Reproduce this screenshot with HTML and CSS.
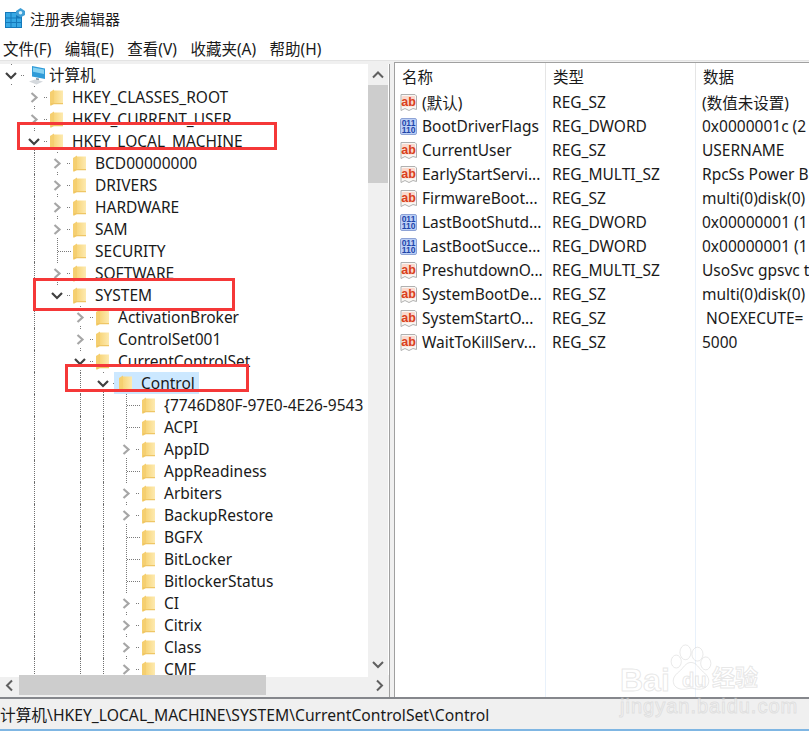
FILE: index.html
```html
<!DOCTYPE html>
<html lang="zh">
<head>
<meta charset="utf-8">
<title>注册表编辑器</title>
<link rel="stylesheet" href="styles.css">
</head>
<body>
<svg class="defs" width="0" height="0" aria-hidden="true">
  <defs>
    <linearGradient id="fold" x1="0" x2="1" y1="0" y2="0">
      <stop offset="0" stop-color="#f8d67c"/><stop offset="1" stop-color="#fdeab0"/>
    </linearGradient>
    <symbol id="closed" viewBox="0 0 27 22">
      <path class="dots" d="M11.5 0V1M11.5 20V21M21 11.5H25"/>
      <path class="chev-c" d="M8.5 7l5 4.5-5 4.5"/>
    </symbol>
    <symbol id="open" viewBox="0 0 27 22">
      <path class="dots" d="M11.5 0V1M11.5 20V22M21 11.5H25"/>
      <path class="chev-o" d="M6 9l5 5 5-5"/>
    </symbol>
    <symbol id="openlast" viewBox="0 0 27 22">
      <path class="dots" d="M11.5 0V1M21 11.5H25"/>
      <path class="chev-o" d="M6 9l5 5 5-5"/>
    </symbol>
    <symbol id="leaf" viewBox="0 0 27 22">
      <path class="dots" d="M11.5 0V22M12 11.5H26"/>
    </symbol>
    <symbol id="folder" viewBox="0 0 13 16">
      <path d="M4 1H13V14H4Z" fill="url(#fold)"/>
      <path d="M0 2.5L4 0V14.5L1 16H0Z" fill="#f5cf70"/>
      <path d="M1 13.6H13V14.8H3L1 16Z" fill="#efc665"/>
    </symbol>
    <symbol id="computer" viewBox="0 0 18 20">
      <path d="M4 1L17 3.5V14L4 11.5Z" fill="#2f9bd8"/>
      <path d="M5 2.5L16 4.6V9L5 6.8Z" fill="#86d2f2"/>
      <path d="M8 13L11 13.6V15.4L8 14.8Z" fill="#8b9aa5"/>
      <path d="M1 16.5L7 14.5L15 16.5L8.5 19.5Z" fill="#d5d9dd"/>
    </symbol>
    <symbol id="sz" viewBox="0 0 17 17">
      <path d="M1 .5H15L16.5 2V15.5L13 14.5L9 16.5L5 14.5L1 16.5Z" fill="#f9f7f4" stroke="#b0b0b0"/>
      <rect x="2" y="2" width="13" height="10.5" rx="1" fill="#fbd9cd"/>
      <text x="8.6" y="11.5" class="ab">ab</text>
    </symbol>
    <symbol id="dw" viewBox="0 0 17 17">
      <rect x=".5" y=".5" width="16" height="16" rx="1.5" fill="#bcd0f6" stroke="#8ea3d6"/>
      <text x="8.5" y="7.5" class="bin">011</text>
      <text x="8.5" y="15" class="bin">110</text>
    </symbol>
  </defs>
</svg>

<div class="window">
  <header class="titlebar">
    <svg class="app-icon" width="20" height="20" viewBox="0 0 20 20" aria-hidden="true">
      <rect x="0" y="4" width="17" height="16" fill="#1479bb"/>
      <path d="M1 5H5.5V9.5H1ZM6.5 5H11V9.5H6.5ZM1 10.5H5.5V14H1ZM6.5 10.5H11V14H6.5ZM12 10.5H16V14H12ZM1 15H5.5V19H1ZM6.5 15H11V19H6.5ZM12 15H16V19H12Z" fill="#36a8e4"/>
      <path d="M15.5 0L20 3V7L15.5 9.5L11 7V3Z" fill="#3f9fd6"/>
      <circle cx="15.5" cy="4.7" r="1.8" fill="#d5effb"/>
    </svg>
    <span>注册表编辑器</span>
  </header>
  <nav class="menubar">
    <span>文件(F)</span><span>编辑(E)</span><span>查看(V)</span><span>收藏夹(A)</span><span>帮助(H)</span>
  </nav>

  <main class="panes">
    <section class="tree-pane">
      <div class="tree-view">
        <div class="tree">
          <div class="row"><svg class="exp"><use href="#open"/></svg><svg class="ico-pc"><use href="#computer"/></svg><span class="lbl root">计算机</span></div>

          <div class="row"><i class="g"></i><svg class="exp"><use href="#closed"/></svg><svg class="fld"><use href="#folder"/></svg><span class="lbl">HKEY_CLASSES_ROOT</span></div>
          <div class="row"><i class="g"></i><svg class="exp"><use href="#closed"/></svg><svg class="fld"><use href="#folder"/></svg><span class="lbl">HKEY_CURRENT_USER</span></div>
          <div class="row"><i class="g"></i><svg class="exp"><use href="#open"/></svg><svg class="fld"><use href="#folder"/></svg><span class="lbl">HKEY_LOCAL_MACHINE</span></div>

          <div class="row"><i class="g"></i><i class="g on"></i><svg class="exp"><use href="#closed"/></svg><svg class="fld"><use href="#folder"/></svg><span class="lbl">BCD00000000</span></div>
          <div class="row"><i class="g"></i><i class="g on"></i><svg class="exp"><use href="#closed"/></svg><svg class="fld"><use href="#folder"/></svg><span class="lbl">DRIVERS</span></div>
          <div class="row"><i class="g"></i><i class="g on"></i><svg class="exp"><use href="#closed"/></svg><svg class="fld"><use href="#folder"/></svg><span class="lbl">HARDWARE</span></div>
          <div class="row"><i class="g"></i><i class="g on"></i><svg class="exp"><use href="#closed"/></svg><svg class="fld"><use href="#folder"/></svg><span class="lbl">SAM</span></div>
          <div class="row"><i class="g"></i><i class="g on"></i><svg class="exp"><use href="#leaf"/></svg><svg class="fld"><use href="#folder"/></svg><span class="lbl">SECURITY</span></div>
          <div class="row"><i class="g"></i><i class="g on"></i><svg class="exp"><use href="#closed"/></svg><svg class="fld"><use href="#folder"/></svg><span class="lbl">SOFTWARE</span></div>
          <div class="row"><i class="g"></i><i class="g on"></i><svg class="exp"><use href="#openlast"/></svg><svg class="fld"><use href="#folder"/></svg><span class="lbl">SYSTEM</span></div>

          <div class="row"><i class="g"></i><i class="g on"></i><i class="g"></i><svg class="exp"><use href="#closed"/></svg><svg class="fld"><use href="#folder"/></svg><span class="lbl">ActivationBroker</span></div>
          <div class="row"><i class="g"></i><i class="g on"></i><i class="g"></i><svg class="exp"><use href="#closed"/></svg><svg class="fld"><use href="#folder"/></svg><span class="lbl">ControlSet001</span></div>
          <div class="row"><i class="g"></i><i class="g on"></i><i class="g"></i><svg class="exp"><use href="#open"/></svg><svg class="fld"><use href="#folder"/></svg><span class="lbl">CurrentControlSet</span></div>

          <div class="row"><i class="g"></i><i class="g on"></i><i class="g"></i><i class="g on"></i><svg class="exp"><use href="#open"/></svg><span class="sel"><svg class="fld"><use href="#folder"/></svg><span class="lbl">Control</span></span></div>

          <div class="row"><i class="g"></i><i class="g on"></i><i class="g"></i><i class="g on"></i><i class="g on"></i><svg class="exp"><use href="#leaf"/></svg><svg class="fld"><use href="#folder"/></svg><span class="lbl">{7746D80F-97E0-4E26-9543</span></div>
          <div class="row"><i class="g"></i><i class="g on"></i><i class="g"></i><i class="g on"></i><i class="g on"></i><svg class="exp"><use href="#leaf"/></svg><svg class="fld"><use href="#folder"/></svg><span class="lbl">ACPI</span></div>
          <div class="row"><i class="g"></i><i class="g on"></i><i class="g"></i><i class="g on"></i><i class="g on"></i><svg class="exp"><use href="#closed"/></svg><svg class="fld"><use href="#folder"/></svg><span class="lbl">AppID</span></div>
          <div class="row"><i class="g"></i><i class="g on"></i><i class="g"></i><i class="g on"></i><i class="g on"></i><svg class="exp"><use href="#leaf"/></svg><svg class="fld"><use href="#folder"/></svg><span class="lbl">AppReadiness</span></div>
          <div class="row"><i class="g"></i><i class="g on"></i><i class="g"></i><i class="g on"></i><i class="g on"></i><svg class="exp"><use href="#closed"/></svg><svg class="fld"><use href="#folder"/></svg><span class="lbl">Arbiters</span></div>
          <div class="row"><i class="g"></i><i class="g on"></i><i class="g"></i><i class="g on"></i><i class="g on"></i><svg class="exp"><use href="#closed"/></svg><svg class="fld"><use href="#folder"/></svg><span class="lbl">BackupRestore</span></div>
          <div class="row"><i class="g"></i><i class="g on"></i><i class="g"></i><i class="g on"></i><i class="g on"></i><svg class="exp"><use href="#leaf"/></svg><svg class="fld"><use href="#folder"/></svg><span class="lbl">BGFX</span></div>
          <div class="row"><i class="g"></i><i class="g on"></i><i class="g"></i><i class="g on"></i><i class="g on"></i><svg class="exp"><use href="#leaf"/></svg><svg class="fld"><use href="#folder"/></svg><span class="lbl">BitLocker</span></div>
          <div class="row"><i class="g"></i><i class="g on"></i><i class="g"></i><i class="g on"></i><i class="g on"></i><svg class="exp"><use href="#leaf"/></svg><svg class="fld"><use href="#folder"/></svg><span class="lbl">BitlockerStatus</span></div>
          <div class="row"><i class="g"></i><i class="g on"></i><i class="g"></i><i class="g on"></i><i class="g on"></i><svg class="exp"><use href="#closed"/></svg><svg class="fld"><use href="#folder"/></svg><span class="lbl">CI</span></div>
          <div class="row"><i class="g"></i><i class="g on"></i><i class="g"></i><i class="g on"></i><i class="g on"></i><svg class="exp"><use href="#closed"/></svg><svg class="fld"><use href="#folder"/></svg><span class="lbl">Citrix</span></div>
          <div class="row"><i class="g"></i><i class="g on"></i><i class="g"></i><i class="g on"></i><i class="g on"></i><svg class="exp"><use href="#closed"/></svg><svg class="fld"><use href="#folder"/></svg><span class="lbl">Class</span></div>
          <div class="row"><i class="g"></i><i class="g on"></i><i class="g"></i><i class="g on"></i><i class="g on"></i><svg class="exp"><use href="#closed"/></svg><svg class="fld"><use href="#folder"/></svg><span class="lbl">CMF</span></div>
        </div>
        <div class="vscroll">
          <svg class="arrow" viewBox="0 0 20 20"><path d="M5 13l5-5 5 5"/></svg>
          <div class="vtrack"><div class="vthumb"></div></div>
          <svg class="arrow" viewBox="0 0 20 20"><path d="M5 7.5l5 5 5-5"/></svg>
        </div>
      </div>
      <div class="hscroll">
        <svg class="arrow" viewBox="0 0 20 20"><path d="M12 5l-5 5 5 5"/></svg>
        <div class="htrack"><div class="hthumb"></div></div>
        <svg class="arrow" viewBox="0 0 20 20"><path d="M8 5l5 5-5 5"/></svg>
      </div>
    </section>

    <section class="list-pane">
      <div class="lrow head"><span class="c1 h">名称</span><span class="c2 h">类型</span><span class="c3 h">数据</span></div>
      <div class="lrow"><span class="c1"><svg class="val"><use href="#sz"/></svg><span class="n">(默认)</span></span><span class="c2">REG_SZ</span><span class="c3">(数值未设置)</span></div>
      <div class="lrow"><span class="c1"><svg class="val"><use href="#dw"/></svg><span class="n">BootDriverFlags</span></span><span class="c2">REG_DWORD</span><span class="c3">0x0000001c (2</span></div>
      <div class="lrow"><span class="c1"><svg class="val"><use href="#sz"/></svg><span class="n">CurrentUser</span></span><span class="c2">REG_SZ</span><span class="c3">USERNAME</span></div>
      <div class="lrow"><span class="c1"><svg class="val"><use href="#sz"/></svg><span class="n">EarlyStartServi...</span></span><span class="c2">REG_MULTI_SZ</span><span class="c3">RpcSs Power B</span></div>
      <div class="lrow"><span class="c1"><svg class="val"><use href="#sz"/></svg><span class="n">FirmwareBoot...</span></span><span class="c2">REG_SZ</span><span class="c3">multi(0)disk(0)</span></div>
      <div class="lrow"><span class="c1"><svg class="val"><use href="#dw"/></svg><span class="n">LastBootShutd...</span></span><span class="c2">REG_DWORD</span><span class="c3">0x00000001 (1</span></div>
      <div class="lrow"><span class="c1"><svg class="val"><use href="#dw"/></svg><span class="n">LastBootSucce...</span></span><span class="c2">REG_DWORD</span><span class="c3">0x00000001 (1</span></div>
      <div class="lrow"><span class="c1"><svg class="val"><use href="#sz"/></svg><span class="n">PreshutdownO...</span></span><span class="c2">REG_MULTI_SZ</span><span class="c3">UsoSvc gpsvc t</span></div>
      <div class="lrow"><span class="c1"><svg class="val"><use href="#sz"/></svg><span class="n">SystemBootDe...</span></span><span class="c2">REG_SZ</span><span class="c3">multi(0)disk(0)</span></div>
      <div class="lrow"><span class="c1"><svg class="val"><use href="#sz"/></svg><span class="n">SystemStartO...</span></span><span class="c2">REG_SZ</span><span class="c3 pre"> NOEXECUTE=</span></div>
      <div class="lrow"><span class="c1"><svg class="val"><use href="#sz"/></svg><span class="n">WaitToKillServ...</span></span><span class="c2">REG_SZ</span><span class="c3">5000</span></div>
      <div class="lfill"><span class="c1"></span><span class="c2"></span><span class="c3"></span></div>
    </section>
  </main>

  <footer class="statusbar">计算机\HKEY_LOCAL_MACHINE\SYSTEM\CurrentControlSet\Control</footer>

  <div class="mark mark-a"></div>
  <div class="mark mark-b"></div>
  <div class="mark mark-c"></div>

  <div class="wm" aria-hidden="true">
    <span class="wm-bai">Bai</span>
    <svg class="wm-paw" width="46" height="48" viewBox="0 0 46 52">
      <ellipse cx="17" cy="9" rx="6" ry="8"/><ellipse cx="30" cy="11" rx="6" ry="7.5"/>
      <ellipse cx="7" cy="19" rx="5.5" ry="7"/><ellipse cx="39" cy="21" rx="5.5" ry="7"/>
      <path d="M23 20c-6 0-8 6-13 10-5 4-7 8-6 12 1 5 6 7 10 7 4 0 6-1 9-1s5 1 9 1 9-2 10-7c1-4-1-8-6-12-5-4-7-10-13-10Z"/>
    </svg>
    <span class="wm-du">du</span>
    <span class="wm-cn">经验</span>
    <span class="wm-url">jingyan.baidu.com</span>
  </div>
</div>
</body>
</html>
```
FILE: styles.css
```css
* { box-sizing: border-box; }
html, body { margin: 0; padding: 0; height: 100%; overflow: hidden; background: #fff; }
body { font-family: "Noto Sans", "Noto Sans CJK SC", sans-serif; font-size: 15.5px; color: #1a1a1a; }
.defs { position: absolute; }
.window { position: relative; width: 809px; height: 731px; display: flex; flex-direction: column; overflow: hidden; }

.titlebar { height: 36px; display: flex; align-items: center; gap: 5px; padding: 0 0 0 5px; flex: none; font-size: 15px; }
.app-icon { flex: none; }
.menubar { height: 24px; display: flex; align-items: center; gap: 13.5px; padding: 1px 0 0 3px; flex: none; }

.panes { height: 639px; flex: none; display: flex; background: #f0f0f0; border-top: 1px solid #e3e3e3; padding-top: 3px; border-bottom: 2px solid #85878c; }
.tree-pane { width: 390px; flex: none; display: flex; flex-direction: column; border-right: 1px solid #a0a0a0; background: #f0f0f0; }
.tree-view { flex: 1; min-height: 0; display: flex; background: #fff; }
.tree { width: 368px; flex: none; height: 613px; overflow: hidden; background: #fff; }
.row { height: 22px; display: flex; align-items: center; white-space: nowrap; }
.g { display: block; flex: none; width: 23px; height: 22px; }
.g.on { padding-left: 11px; }
.g.on::before { content: ""; display: block; height: 100%; border-left: 1px dotted #707070; }
.exp { flex: none; width: 27px; height: 22px; }
.fld { flex: none; width: 13px; height: 17px; margin-right: 9px; }
.ico-pc { flex: none; width: 18px; height: 20px; margin: 0 3px 0 1px; }
.dots { fill: none; stroke: #7a7a7a; stroke-width: 1; stroke-dasharray: 1 1; }
.chev-c { fill: none; stroke: #a6a6a6; stroke-width: 2.2; }
.chev-o { fill: none; stroke: #404040; stroke-width: 2.2; }
.lbl { line-height: 22px; }
.sel { display: flex; align-items: center; height: 22px; background: #cce8ff; margin-left: -5px; padding: 0 4px 0 5px; }

.vscroll { width: 20px; flex: none; display: flex; flex-direction: column; background: #f0f0f0; }
.vtrack { flex: 1; }
.vthumb { height: 98px; background: #cdcdcd; }
.arrow { display: block; width: 20px; height: 21px; flex: none; }
.arrow path { fill: none; stroke: #606060; stroke-width: 2; }
.hscroll { height: 20px; flex: none; display: flex; margin-bottom: 2px; }
.htrack { flex: 1; }
.hthumb { width: 247px; height: 20px; margin-left: -1px; background: #cdcdcd; }

.list-pane { margin: -2px 0 0 4px; flex: 1; min-width: 0; display: flex; flex-direction: column; background: #fff; border-left: 1px solid #a0a0a0; border-top: 1px solid #a0a0a0; overflow: hidden; }
.lrow { height: 24px; flex: none; display: flex; align-items: center; white-space: nowrap; }
.lrow.head { height: 27px; }
.c1, .c2, .c3 { height: 100%; display: flex; align-items: center; flex: none; border-right: 1px solid #e8f1fb; padding-left: 6px; }
.c1 { width: 151px; padding-left: 5px; overflow: hidden; }
.c2 { width: 150px; }
.c3 { width: 300px; white-space: pre; border-right: 0; }
.h { padding: 0 0 1px 7px; border-right-color: #e5e5e5; }
.val { flex: none; width: 17px; height: 17px; margin-right: 5px; }
.ab { font: bold 12.5px "Liberation Sans", sans-serif; fill: #d93f20; text-anchor: middle; }
.bin { font: bold 8.5px "Liberation Sans", sans-serif; fill: #1f45ab; text-anchor: middle; }
.lfill { flex: 1; display: flex; }

.statusbar { flex: 1; min-height: 0; background: #f0f0f0; font-size: 15.7px; line-height: 32px; border-bottom: 2px solid #7fb6e3; white-space: nowrap; }

.mark { position: absolute; border: 3px solid #f53838; }
.mark-a { left: 17px; top: 122px; width: 260px; height: 28px; }
.mark-b { left: 33px; top: 278px; width: 202px; height: 33px; }
.mark-c { left: 65px; top: 364px; width: 184px; height: 28px; }

.wm { position: absolute; left: 615px; top: 640px; width: 180px; height: 80px; }
.wm span { position: absolute; white-space: nowrap; color: rgba(255,255,255,.4); -webkit-text-stroke: 1px rgba(195,195,195,.4); }
.wm-bai { left: 5px; top: 24px; font: bold 32px/1 "Liberation Sans", sans-serif; }
.wm-paw { position: absolute; left: 53px; top: 4px; fill: rgba(255,255,255,.4); stroke: rgba(195,195,195,.4); stroke-width: 1; }
.wm-du { left: 67px; top: 30px; font: bold 20px/1 "Liberation Sans", sans-serif; }
.wm-cn { left: 97px; top: 25px; font: bold 23px/1 "Noto Sans CJK SC", sans-serif; }
.wm-url { left: 5px; top: 56px; font: 20px/1 "Liberation Sans", sans-serif; letter-spacing: 1px; }
```
